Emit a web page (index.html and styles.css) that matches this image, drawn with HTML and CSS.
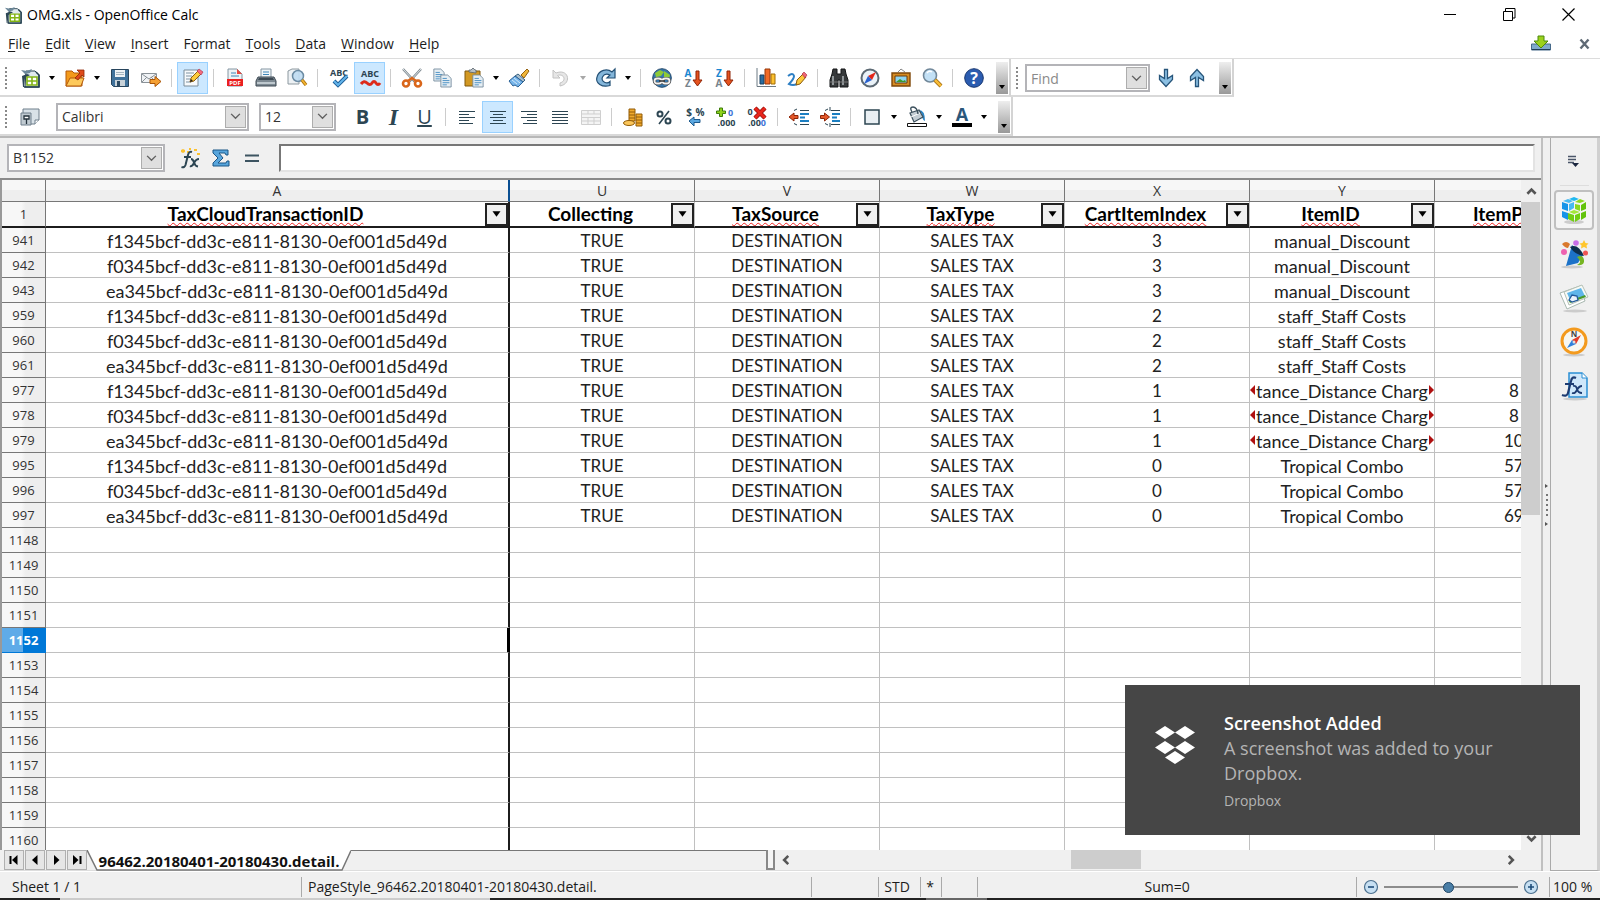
FILE: index.html
```html
<!DOCTYPE html>
<html lang="en">
<head>
<meta charset="utf-8">
<title>OMG.xls - OpenOffice Calc</title>
<link rel="stylesheet" href="styles.css">
</head>
<body>
<svg class="defs" aria-hidden="true">
  <symbol id="calc" viewBox="0 0 20 20"><path d="M6 3h9l4 4v12H5z" fill="#dfe9ee" stroke="#24404f"/><path d="M16 4l3 3v12H4" fill="none" stroke="#24404f" stroke-width="1.6"/><path d="M1 2l6 1 5-2-2 4-5 1z" fill="#6b8799"/><path d="M2 8l5-2 3 1-5 3-1 9H3z" fill="#2c4656"/><path d="M7 9h10v8H7z" fill="#fff" stroke="#82b414" stroke-width="1.6"/><path d="M7 13h10M12 9v8" stroke="#82b414" stroke-width="1.6"/></symbol>
  <symbol id="caret" viewBox="0 0 8 6"><path d="M1 1h6L4 5z" fill="currentColor"/></symbol>
  <symbol id="chev" viewBox="0 0 12 8"><path d="M1 1l5 5 5-5" fill="none" stroke="currentColor" stroke-width="1.6"/></symbol>
  <symbol id="chevbold" viewBox="0 0 12 8"><path d="M1.500 1l4.500 4.500L10.500 1" fill="none" stroke="currentColor" stroke-width="2.8"/></symbol>
  <symbol id="doc" viewBox="0 0 14 16"><path d="M1 1h8l4 4v10H1z" fill="#e6eef3" stroke="#72889a"/><path d="M3 5h5M3 7.500h8M3 10h8M3 12.500h5" stroke="#3b86c0"/></symbol>
</svg>
<div class="window">
  <header class="titlebar">
    <svg class="ico18"><use href="#calc"/></svg>
    <h1>OMG.xls - OpenOffice Calc</h1>
    <div class="winbtns">
      <button aria-label="Minimize"><svg width="13" height="13"><path d="M0 6.500h12" stroke="#000"/></svg></button>
      <button aria-label="Restore"><svg width="13" height="13" fill="none" stroke="#000"><path d="M.5 3.500h9v9h-9zM2.500 3.500v-3h9.500v9.500h-2.500"/></svg></button>
      <button aria-label="Close"><svg width="13" height="13"><path d="M.5.5l12 12M12.500.5l-12 12" stroke="#000" stroke-width="1.200"/></svg></button>
    </div>
  </header>
  <nav class="menubar">
    <button><u>F</u>ile</button><button><u>E</u>dit</button><button><u>V</u>iew</button><button><u>I</u>nsert</button><button>F<u>o</u>rmat</button><button><u>T</u>ools</button><button><u>D</u>ata</button><button><u>W</u>indow</button><button><u>H</u>elp</button>
    <div class="menu-end">
      <button aria-label="Update"><svg class="ico20" viewBox="0 0 20 20"><path d="M.5 10h19v6H.5z" fill="#7fa9cc" stroke="#476a8a"/><path d="M1 15.500h18" stroke="#1f3d58"/><path d="M7 2h6v5h4l-7 7-7-7h4z" fill="#9bd11c" stroke="#4d8a0c"/></svg></button>
      <button aria-label="Close document"><svg width="12" height="12"><path d="M1.500 1.500l8 9M9.500 1.500l-8 9" stroke="#5f6a75" stroke-width="2.400"/></svg></button>
    </div>
  </nav>

  <div class="toolrow">
    <div class="toolbar" role="toolbar" aria-label="Standard">
      <span class="grip"></span>
      <button class="tb" aria-label="New"><svg class="ico20"><use href="#calc"/></svg></button>
      <button class="dd" aria-label="New options"><svg><use href="#caret"/></svg></button>
      <button class="tb" aria-label="Open"><svg class="ico20" viewBox="0 0 20 20"><path d="M1 18V3h6l2 2h8v13z" fill="#f39a1b" stroke="#b4590b"/><path d="M1 18l4-8h14l-3 8z" fill="#fdc95b" stroke="#b4590b"/><path d="M10 10l5-5-3-3h7v7l-2-2-4 5z" fill="#df4b1b" stroke="#8f2606" stroke-width=".8"/></svg></button>
      <button class="dd" aria-label="Open options"><svg><use href="#caret"/></svg></button>
      <button class="tb" aria-label="Save"><svg class="ico20" viewBox="0 0 20 20"><path d="M1.500 1.500h17v17h-15l-2-2z" fill="#40729b" stroke="#27445c"/><path d="M5 2h10v7H5z" fill="#eef3f6"/><path d="M6 4.500h8M6 6.500h8" stroke="#a5b5c0"/><path d="M5 12h10v6H5z" fill="#c8d2d9"/><path d="M7 13h3v5H7z" fill="#2c4a62"/></svg></button>
      <button class="tb" aria-label="E-mail document"><svg class="ico20" viewBox="0 0 20 20"><path d="M.5 5.500h15v9H.5z" fill="#f0f3f6" stroke="#8a9298"/><path d="M1 6l7 5 7-5M1 14l5-5M15 14l-5-5" fill="none" stroke="#8a9298"/><path d="M9 11.500h5V8.500l6 5-6 5v-3H9z" fill="#f5a033" stroke="#a85408"/></svg></button>
      <span class="sep"></span>
      <button class="tb on" aria-label="Edit file"><svg class="ico20" viewBox="0 0 20 20"><path d="M1 2h14v16H1z" fill="#f7fafc" stroke="#7b8d9a"/><path d="M3 5h8M3 8h6M3 11h4M3 14h5" stroke="#7e93a3"/><path d="M7 14l1-4 7-7 3 3-7 7z" fill="#fccb3b" stroke="#8c5b11"/><path d="M14 3l2-2 4 3-2 3z" fill="#f46b7e" stroke="#a72a3e" stroke-width=".6"/><path d="M7 14l1-3 2 2z" fill="#222"/></svg></button>
      <span class="sep"></span>
      <button class="tb" aria-label="Export as PDF"><svg class="ico20" viewBox="0 0 20 20"><path d="M3 1h9l5 5v12H3z" fill="#edf2f5" stroke="#8496a3"/><path d="M12 1l5 5h-5z" fill="#e8473f"/><path d="M6 5h5M6 8h8" stroke="#3e86b9"/><path d="M2 11h16v7H2z" fill="#ea2020"/><text x="10" y="17" text-anchor="middle" font-size="6" class="glyph" fill="#fff">PDF</text></svg></button>
      <button class="tb" aria-label="Print"><svg class="ico20" viewBox="0 0 20 20"><path d="M5 1h10v9H5z" fill="#f2f6f8" stroke="#8496a3"/><path d="M7 4h6M7 6.500h6" stroke="#3e86b9"/><path d="M2 9h16l2 4v5H0v-5z" fill="#7e8a93" stroke="#3d4953"/><path d="M3 10h14l1 2H2z" fill="#3d4953"/><path d="M1 15h18" stroke="#d5dde2" stroke-width="1.500"/></svg></button>
      <button class="tb" aria-label="Page preview"><svg class="ico20" viewBox="0 0 20 20"><path d="M1 3l4-2h7v15H1z" fill="#edf1f4" stroke="#8c989f"/><circle cx="11" cy="8" r="5.500" fill="#bfdcf2" fill-opacity=".9" stroke="#6b8ba3" stroke-width="1.500"/><path d="M15 12l4 5" stroke="#a36a0b" stroke-width="3.400"/><path d="M15 12l4 5" stroke="#f2b330" stroke-width="2"/></svg></button>
      <span class="sep"></span>
      <button class="tb" aria-label="Spelling"><svg class="ico20" viewBox="0 0 20 20"><text x="10" y="8" text-anchor="middle" font-size="9" class="glyph" fill="#2c4552">ABC</text><path d="M5 13l4 4 9-9" fill="none" stroke="#1a5c96" stroke-width="4"/><path d="M5 13l4 4 9-9" fill="none" stroke="#62b3ea" stroke-width="2.200"/></svg></button>
      <button class="tb on" aria-label="AutoSpellcheck"><svg class="ico20" viewBox="0 0 20 20"><text x="10" y="9" text-anchor="middle" font-size="9" class="glyph" fill="#2c4552">ABC</text><path d="M1 16q3-4 6-1t5 0 4 0 4 0" fill="none" stroke="#dd2a1b" stroke-width="3"/></svg></button>
      <span class="sep"></span>
      <button class="tb" aria-label="Cut"><svg class="ico20" viewBox="0 0 20 20"><path d="M1 1l12 13M19 1L7 14" stroke="#7d888f" stroke-width="2.400"/><path d="M1 1l12 13M19 1L7 14" stroke="#dfe5e9"/><circle cx="4" cy="15.500" r="3" fill="none" stroke="#d9661a" stroke-width="2.600"/><circle cx="16" cy="15.500" r="3" fill="none" stroke="#d9661a" stroke-width="2.600"/><path d="M6 13l4-3 4 3" stroke="#d9661a" stroke-width="2.500" fill="none"/></svg></button>
      <button class="tb" aria-label="Copy"><svg class="ico20" viewBox="0 0 20 20"><use href="#doc" x="0" y="0" width="12" height="14"/><use href="#doc" x="7" y="6" width="12" height="14"/></svg></button>
      <button class="tb" aria-label="Paste"><svg class="ico20" viewBox="0 0 20 20"><path d="M1 3h15v15H1z" fill="#d29822" stroke="#80590c"/><path d="M5 4V2h2l2-2 2 2h1v3z" fill="#b6bec4" stroke="#59646c" stroke-width=".8"/><use href="#doc" x="8" y="6" width="12" height="14"/></svg></button>
      <button class="dd" aria-label="Paste options"><svg><use href="#caret"/></svg></button>
      <button class="tb" aria-label="Format paintbrush"><svg class="ico20" viewBox="0 0 20 20"><path d="M12 7l6-6 2 2-5 7z" fill="#f0b63a" stroke="#946210"/><path d="M9 6l7 6-2 2-8-6z" fill="#a9bfce" stroke="#38617f"/><path d="M6 8l8 6-5 5-3-2-2 1-4-5z" fill="#77b5ea" stroke="#2a6297"/><path d="M3 12l5 4M5 10l6 5" stroke="#d0e8fa"/></svg></button>
      <span class="sep"></span>
      <button class="tb" aria-label="Undo" disabled><svg class="ico20" viewBox="0 0 20 20"><path d="M2 2v8h7L6.500 7.500C13 5 16 13 9 15v3c12-2 9-18-4-13z" fill="#e6e6e6" stroke="#c2c2c2"/></svg></button>
      <button class="dd off" aria-label="Undo options" disabled><svg><use href="#caret"/></svg></button>
      <button class="tb" aria-label="Redo"><svg class="ico20" viewBox="0 0 20 20"><path d="M19 1v9h-8l3-3C7 4 3 12 9 14.500c2 .8 4 0 5-1v4C6 20-1 15 1 9 3 2 11 0 16 4z" fill="#84b6da" stroke="#235075" stroke-width="1.200"/></svg></button>
      <button class="dd" aria-label="Redo options"><svg><use href="#caret"/></svg></button>
      <span class="sep"></span>
      <button class="tb" aria-label="Hyperlink"><svg class="ico20" viewBox="0 0 20 20"><circle cx="10" cy="10" r="9.300" fill="#3677ae" stroke="#24496b"/><path d="M3 5l5-3 4 2-3 4-5 1zM12 3l6 4-1 4-5-2z" fill="#8fca36"/><rect x="2.500" y="10.500" width="7" height="5" rx="2.500" fill="none" stroke="#444" stroke-width="3"/><rect x="10.500" y="10.500" width="7" height="5" rx="2.500" fill="none" stroke="#444" stroke-width="3"/><rect x="2.500" y="10.500" width="7" height="5" rx="2.500" fill="none" stroke="#f1f1f1" stroke-width="1.800"/><rect x="10.500" y="10.500" width="7" height="5" rx="2.500" fill="none" stroke="#f1f1f1" stroke-width="1.800"/><path d="M7 13h6" stroke="#333" stroke-width="1.500"/></svg></button>
      <button class="tb" aria-label="Sort ascending"><svg class="ico20" viewBox="0 0 20 20"><text x="5" y="9" text-anchor="middle" font-size="10" class="glyph" fill="#1a86d0">A</text><text x="5" y="19" text-anchor="middle" font-size="10" class="glyph" fill="#77838c">Z</text><path d="M13 3h3v9h3l-4.500 6L10 12h3z" fill="#e5531f" stroke="#8f2506"/></svg></button>
      <button class="tb" aria-label="Sort descending"><svg class="ico20" viewBox="0 0 20 20"><text x="5" y="9" text-anchor="middle" font-size="10" class="glyph" fill="#1a86d0">Z</text><text x="5" y="19" text-anchor="middle" font-size="10" class="glyph" fill="#77838c">A</text><path d="M13 3h3v9h3l-4.500 6L10 12h3z" fill="#e5531f" stroke="#8f2506"/></svg></button>
      <span class="sep"></span>
      <button class="tb" aria-label="Chart"><svg class="ico20" viewBox="0 0 20 20"><path d="M1 0v18.500h19" fill="none" stroke="#6d7a84"/><path d="M4 7h4v9H4z" fill="#2b6c9e" stroke="#193f5e"/><path d="M9 1h5v15H9z" fill="#f06a26" stroke="#943407"/><path d="M15 6h4v10h-4z" fill="#fcc02f" stroke="#a16d06"/></svg></button>
      <button class="tb" aria-label="Show draw functions"><svg class="ico20" viewBox="0 0 20 20"><path d="M1 8q5-4 6 0 0 3-5 8 4 2 8 0" fill="none" stroke="#2d7fc4" stroke-width="2"/><path d="M9 17l1-5 6-6 3 3-6 7z" fill="#fcc93c" stroke="#8b5a0d"/><path d="M15 6l2-2 3 3-2 3z" fill="#ee6577" stroke="#a52a3a" stroke-width=".6"/></svg></button>
      <span class="sep"></span>
      <button class="tb" aria-label="Find and replace"><svg class="ico20" viewBox="0 0 20 20"><path d="M4 1h4v5h4V1h4l1 5 2 6v7h-8v-7H9v7H1v-7l2-6z" fill="#36393b" stroke="#131516"/><path d="M4 8v9M14 8v9" stroke="#9aa0a4" stroke-width="1.800"/><path d="M1 14h8M11 14h8" stroke="#777"/></svg></button>
      <button class="tb" aria-label="Navigator"><svg class="ico20" viewBox="0 0 20 20"><circle cx="10" cy="10" r="8.500" fill="#eaf2f8" stroke="#5d6a74" stroke-width="2"/><path d="M16 4l-4 8-4-4z" fill="#e3261a"/><path d="M4 16l4-8 4 4z" fill="#2a62cf"/></svg></button>
      <button class="tb" aria-label="Gallery"><svg class="ico20" viewBox="0 0 20 20"><path d="M7 4l3-3 4 3" fill="none" stroke="#888"/><path d="M1 5h18v13H1z" fill="#d58b22" stroke="#7e4708" stroke-width="1.400"/><path d="M4 8h12v7H4z" fill="#8ed5f2" stroke="#6e3c08"/><path d="M5 14l4-3 3 2 2-1 1 2z" fill="#3c9a2c"/></svg></button>
      <button class="tb" aria-label="Zoom"><svg class="ico20" viewBox="0 0 20 20"><circle cx="8" cy="7.500" r="6.500" fill="#c2e0f5" stroke="#71889a" stroke-width="1.600"/><path d="M5 5q2-3 5-1" stroke="#fff" fill="none" stroke-width="1.500"/><path d="M13 12l6 6" stroke="#9a650b" stroke-width="4"/><path d="M13 12l6 6" stroke="#f7bb36" stroke-width="2.500"/></svg></button>
      <span class="sep"></span>
      <button class="tb" aria-label="Help"><svg class="ico20" viewBox="0 0 20 20"><circle cx="10" cy="10" r="9.300" fill="#2b5cb0" stroke="#173670"/><text x="10" y="16" text-anchor="middle" font-size="16" class="glyph" fill="#fff">?</text></svg></button>
      <button class="more" aria-label="More standard tools"><svg><use href="#caret"/></svg></button>
    </div>
    <div class="toolbar" role="toolbar" aria-label="Find">
      <span class="grip"></span>
      <div class="combo find"><input type="text" placeholder="Find" aria-label="Find"><span class="combo-arrow"><svg><use href="#chev"/></svg></span></div>
      <button class="tb" aria-label="Find next"><svg class="ico20" viewBox="0 0 20 20"><path d="M8.500 1.500h3v9l5-3v4l-6.500 7-6.500-7v-4l5 3z" fill="#8cc0e3" stroke="#27557a" stroke-width="1.300"/></svg></button>
      <button class="tb" aria-label="Find previous"><svg class="ico20" viewBox="0 0 20 20"><path d="M8.500 18.500h3v-9l5 3v-4l-6.500-7-6.500 7v4l5-3z" fill="#8cc0e3" stroke="#27557a" stroke-width="1.300"/></svg></button>
      <button class="more" aria-label="More find tools"><svg><use href="#caret"/></svg></button>
    </div>
  </div>

  <div class="toolrow">
    <div class="toolbar" role="toolbar" aria-label="Formatting">
      <span class="grip"></span>
      <button class="tb" aria-label="Styles and formatting"><svg class="ico20" viewBox="0 0 20 20"><path d="M3 2h16v11l-4 4H3z" fill="#d9e2e8" stroke="#6e7f8b"/><path d="M15 17v-4h4" fill="#fff" stroke="#6e7f8b"/><path d="M1 6h10v12H1z" fill="#c0cad1" stroke="#6e7f8b"/><path d="M4 9h5v3H4zM6.500 12v5" fill="#fff" stroke="#25333d" stroke-width="1.300"/></svg></button>
      <div class="combo fontname"><select aria-label="Font name"><option>Calibri</option></select><span class="combo-arrow"><svg><use href="#chev"/></svg></span></div>
      <div class="combo fontsize"><select aria-label="Font size"><option>12</option></select><span class="combo-arrow"><svg><use href="#chev"/></svg></span></div>
      <button class="tb letter b" aria-label="Bold">B</button>
      <button class="tb letter i" aria-label="Italic">I</button>
      <button class="tb letter und" aria-label="Underline">U</button>
      <span class="sep"></span>
      <button class="tb" aria-label="Align left"><svg class="ico20 lines" viewBox="0 0 20 20"><path d="M2 4.500h16M2 7.500h10M2 10.500h16M2 13.500h10M2 16.500h14"/></svg></button>
      <button class="tb on" aria-label="Align center"><svg class="ico20 lines" viewBox="0 0 20 20"><path d="M2 4.500h16M5 7.500h10M2 10.500h16M5 13.500h10M2 16.500h16"/></svg></button>
      <button class="tb" aria-label="Align right"><svg class="ico20 lines" viewBox="0 0 20 20"><path d="M2 4.500h16M8 7.500h10M2 10.500h16M8 13.500h10M4 16.500h14"/></svg></button>
      <button class="tb" aria-label="Justify"><svg class="ico20 lines" viewBox="0 0 20 20"><path d="M2 4.500h16M2 7.500h16M2 10.500h16M2 13.500h16M2 16.500h16"/></svg></button>
      <button class="tb" aria-label="Merge cells" disabled><svg class="ico20" viewBox="0 0 20 20"><path d="M.5 3.500h19v14H.5zM.5 7h19M.5 10.500h19M.5 14h19M7 3.500V7M13 3.500V7M7 10.500v7M13 10.500v7" fill="#f4f4f4" stroke="#cfcfcf"/></svg></button>
      <span class="sep"></span>
      <button class="tb" aria-label="Currency"><svg class="ico20" viewBox="0 0 20 20"><path d="M6 2h6v12H6z" fill="#f0a92c" stroke="#925d08"/><path d="M6 5h6M6 8h6M6 11h6" stroke="#925d08"/><path d="M13 7h6v12h-6z" fill="#f0a92c" stroke="#925d08"/><path d="M13 10h6M13 13h6M13 16h6" stroke="#925d08"/><ellipse cx="6" cy="16" rx="5.500" ry="2.500" fill="#fbc65a" stroke="#925d08"/></svg></button>
      <button class="tb" aria-label="Percent"><svg class="ico20" viewBox="0 0 20 20"><circle cx="6" cy="7" r="2.500" fill="none" stroke="#2c4552" stroke-width="2"/><circle cx="14" cy="14" r="2.500" fill="none" stroke="#2c4552" stroke-width="2"/><path d="M15 4L5 17" stroke="#2c4552" stroke-width="1.600"/></svg></button>
      <button class="tb" aria-label="Standard format"><svg class="ico20" viewBox="0 0 20 20"><text x="4" y="9" text-anchor="middle" font-size="10" class="glyph" fill="#2c4552">$</text><text x="15" y="9" text-anchor="middle" font-size="10" class="glyph" fill="#2c4552">%</text><path d="M4 14l5-4v2.500h6v3H9V19z" fill="#5aa7e0" stroke="#1e5a8d"/></svg></button>
      <button class="tb" aria-label="Add decimal place"><svg class="ico20" viewBox="0 0 20 20"><path d="M3.500 1h3v3h3v2.500h-3v3h-3v-3h-3V4h3z" fill="#8ed11c" stroke="#3d7d0b"/><text x="14.500" y="9" text-anchor="middle" font-size="9" class="glyph" fill="#3f74d8">0</text><text x="10.500" y="19" text-anchor="middle" font-size="9" class="glyph" fill="#2c4552">.000</text></svg></button>
      <button class="tb" aria-label="Delete decimal place"><svg class="ico20" viewBox="0 0 20 20"><text x="3" y="8" text-anchor="middle" font-size="9" class="glyph" fill="#2c4552">0</text><text x="10" y="19" text-anchor="middle" font-size="9" class="glyph" fill="#2c4552">.00<tspan fill="#3f74d8">0</tspan></text><path d="M8 1l10 10M18 1L8 11" stroke="#8e0c08" stroke-width="4.400"/><path d="M8 1l10 10M18 1L8 11" stroke="#e8261c" stroke-width="3"/></svg></button>
      <span class="sep"></span>
      <button class="tb" aria-label="Decrease indent"><svg class="ico20" viewBox="0 0 20 20"><path d="M5 3.500l3-1.500M11 3.500h9M5 16.500l3 1.500M11 17.500h9" stroke="#2c4552"/><path d="M11 7h9M11 10.500h5M11 14h9" stroke="#1b7fc2" stroke-width="2"/><path d="M0 10l5-4v2.500h4v3H5V14z" fill="#e5582a" stroke="#8f2506"/></svg></button>
      <button class="tb" aria-label="Increase indent"><svg class="ico20" viewBox="0 0 20 20"><path d="M5 3.500l3-1.500M11 3.500h9M5 16.500l3 1.500M11 17.500h9M10 0v4M10 16v4" stroke="#2c4552"/><path d="M12 7h8M12 10.500h5M12 14h8" stroke="#1b7fc2" stroke-width="2"/><path d="M9.500 10l-5-4v2.500H.5v3h4V14z" fill="#e5582a" stroke="#8f2506"/></svg></button>
      <span class="sep"></span>
      <button class="tb" aria-label="Borders"><svg class="ico20" viewBox="0 0 20 20"><path d="M3 3h14v14H3z" fill="#e9eff3" stroke="#2c4552" stroke-width="1.500"/></svg></button>
      <button class="dd" aria-label="Border options"><svg><use href="#caret"/></svg></button>
      <button class="tb" aria-label="Background color"><svg class="ico20" viewBox="0 0 20 20"><path d="M11 3q7-1 7 11-3-1-3-7z" fill="#2d86c6"/><path d="M3 6l9-3 4 7-9 5z" fill="#c3cdd4" stroke="#3b4f5c" stroke-width="1.200"/><path d="M4 10l9-4" stroke="#fff"/><path d="M5 5q-3-5 1-5t5 7" fill="none" stroke="#3b4f5c" stroke-width="1.400"/><path d="M.5 16.500h19v3H.5z" fill="#fff" stroke="#111"/></svg></button>
      <button class="dd" aria-label="Background color options"><svg><use href="#caret"/></svg></button>
      <button class="tb" aria-label="Font color"><svg class="ico20" viewBox="0 0 20 20"><text x="10" y="14" text-anchor="middle" font-size="18" class="glyph" fill="#2b577b">A</text><path d="M0 16h20v4H0z" fill="#000"/></svg></button>
      <button class="dd" aria-label="Font color options"><svg><use href="#caret"/></svg></button>
      <button class="more" aria-label="More formatting tools"><svg><use href="#caret"/></svg></button>
    </div>
  </div>

  <div class="work">
    <main class="main">
      <div class="formula">
        <div class="combo namebox"><select aria-label="Name box"><option>B1152</option></select><span class="combo-arrow"><svg><use href="#chev"/></svg></span></div>
        <button class="tb" aria-label="Function wizard"><svg class="ico20" viewBox="0 0 20 20"><path d="M1 2l2-1 2 1v2L3 5 1 4zM9 0h2v2H9zM14 1h3v2h-3zM17 5h3v2h-3zM7 3h2v2H7z" fill="#fcc230"/><path d="M12 4q-3-1-4 3L5.500 17q-1 3-4 2M4 9h7" fill="none" stroke="#2c4552" stroke-width="2"/><path d="M11 11q2 0 3 3.500t4 4M19 11q-3 0-5 4t-4 3" fill="none" stroke="#2c4552" stroke-width="2"/></svg></button>
        <button class="tb" aria-label="Sum"><svg class="ico20" viewBox="0 0 20 20"><path d="M2 2h15v5h-2l-1-2H8l4 5-5 5h8l1-2h2v5H2v-3l5-5-5-5z" fill="#57a5dc" stroke="#1b5687"/></svg></button>
        <button class="tb" aria-label="Function"><svg class="ico20" viewBox="0 0 20 20"><path d="M3 7.500h14M3 13h14" stroke="#3d5461" stroke-width="2"/></svg></button>
        <input class="formula-input" type="text" aria-label="Input line">
      </div>
      <div class="sheet">
        <div class="tablewrap">
        <table>
          <colgroup><col class="c-row"><col class="c-a"><col class="c-n"><col class="c-n"><col class="c-n"><col class="c-n"><col class="c-n"><col></colgroup>
          <thead>
            <tr class="cols"><th></th><th>A</th><th>U</th><th>V</th><th>W</th><th>X</th><th>Y</th><th></th></tr>
            <tr class="fields"><th>1</th>
              <td><div><b class="sp">TaxCloudTransactionID</b><button aria-label="Filter TaxCloudTransactionID"><svg><use href="#caret"/></svg></button></div></td>
              <td><div><b>Collecting</b><button aria-label="Filter Collecting"><svg><use href="#caret"/></svg></button></div></td>
              <td><div><b class="sp">TaxSource</b><button aria-label="Filter TaxSource"><svg><use href="#caret"/></svg></button></div></td>
              <td><div><b class="sp">TaxType</b><button aria-label="Filter TaxType"><svg><use href="#caret"/></svg></button></div></td>
              <td><div><b class="sp">CartItemIndex</b><button aria-label="Filter CartItemIndex"><svg><use href="#caret"/></svg></button></div></td>
              <td><div><b class="sp">ItemID</b><button aria-label="Filter ItemID"><svg><use href="#caret"/></svg></button></div></td>
              <td class="cut"><b class="sp">ItemPrice</b></td></tr>
          </thead>
          <tbody>
            <tr><th>941</th><td>f1345bcf-dd3c-e811-8130-0ef001d5d49d</td><td>TRUE</td><td>DESTINATION</td><td>SALES TAX</td><td>3</td><td>manual_Discount</td><td></td></tr>
            <tr><th>942</th><td>f0345bcf-dd3c-e811-8130-0ef001d5d49d</td><td>TRUE</td><td>DESTINATION</td><td>SALES TAX</td><td>3</td><td>manual_Discount</td><td></td></tr>
            <tr><th>943</th><td>ea345bcf-dd3c-e811-8130-0ef001d5d49d</td><td>TRUE</td><td>DESTINATION</td><td>SALES TAX</td><td>3</td><td>manual_Discount</td><td></td></tr>
            <tr><th>959</th><td>f1345bcf-dd3c-e811-8130-0ef001d5d49d</td><td>TRUE</td><td>DESTINATION</td><td>SALES TAX</td><td>2</td><td>staff_Staff Costs</td><td></td></tr>
            <tr><th>960</th><td>f0345bcf-dd3c-e811-8130-0ef001d5d49d</td><td>TRUE</td><td>DESTINATION</td><td>SALES TAX</td><td>2</td><td>staff_Staff Costs</td><td></td></tr>
            <tr><th>961</th><td>ea345bcf-dd3c-e811-8130-0ef001d5d49d</td><td>TRUE</td><td>DESTINATION</td><td>SALES TAX</td><td>2</td><td>staff_Staff Costs</td><td></td></tr>
            <tr><th>977</th><td>f1345bcf-dd3c-e811-8130-0ef001d5d49d</td><td>TRUE</td><td>DESTINATION</td><td>SALES TAX</td><td>1</td><td class="over">tance_Distance Charg</td><td class="num one">8</td></tr>
            <tr><th>978</th><td>f0345bcf-dd3c-e811-8130-0ef001d5d49d</td><td>TRUE</td><td>DESTINATION</td><td>SALES TAX</td><td>1</td><td class="over">tance_Distance Charg</td><td class="num one">8</td></tr>
            <tr><th>979</th><td>ea345bcf-dd3c-e811-8130-0ef001d5d49d</td><td>TRUE</td><td>DESTINATION</td><td>SALES TAX</td><td>1</td><td class="over">tance_Distance Charg</td><td class="num">10</td></tr>
            <tr><th>995</th><td>f1345bcf-dd3c-e811-8130-0ef001d5d49d</td><td>TRUE</td><td>DESTINATION</td><td>SALES TAX</td><td>0</td><td>Tropical Combo</td><td class="num">57</td></tr>
            <tr><th>996</th><td>f0345bcf-dd3c-e811-8130-0ef001d5d49d</td><td>TRUE</td><td>DESTINATION</td><td>SALES TAX</td><td>0</td><td>Tropical Combo</td><td class="num">57</td></tr>
            <tr><th>997</th><td>ea345bcf-dd3c-e811-8130-0ef001d5d49d</td><td>TRUE</td><td>DESTINATION</td><td>SALES TAX</td><td>0</td><td>Tropical Combo</td><td class="num">69</td></tr>
            <tr><th>1148</th><td></td><td></td><td></td><td></td><td></td><td></td><td></td></tr>
            <tr><th>1149</th><td></td><td></td><td></td><td></td><td></td><td></td><td></td></tr>
            <tr><th>1150</th><td></td><td></td><td></td><td></td><td></td><td></td><td></td></tr>
            <tr><th>1151</th><td></td><td></td><td></td><td></td><td></td><td></td><td></td></tr>
            <tr class="current"><th>1152</th><td></td><td></td><td></td><td></td><td></td><td></td><td></td></tr>
            <tr><th>1153</th><td></td><td></td><td></td><td></td><td></td><td></td><td></td></tr>
            <tr><th>1154</th><td></td><td></td><td></td><td></td><td></td><td></td><td></td></tr>
            <tr><th>1155</th><td></td><td></td><td></td><td></td><td></td><td></td><td></td></tr>
            <tr><th>1156</th><td></td><td></td><td></td><td></td><td></td><td></td><td></td></tr>
            <tr><th>1157</th><td></td><td></td><td></td><td></td><td></td><td></td><td></td></tr>
            <tr><th>1158</th><td></td><td></td><td></td><td></td><td></td><td></td><td></td></tr>
            <tr><th>1159</th><td></td><td></td><td></td><td></td><td></td><td></td><td></td></tr>
            <tr><th>1160</th><td></td><td></td><td></td><td></td><td></td><td></td><td></td></tr>
          </tbody>
        </table>
        </div>
        <div class="vscroll">
          <button aria-label="Scroll up"><svg class="up"><use href="#chevbold"/></svg></button>
          <div class="vtrack"><div class="vthumb"></div></div>
          <button aria-label="Scroll down"><svg><use href="#chevbold"/></svg></button>
        </div>
      </div>
      <div class="tabs">
        <div class="tabnav">
          <button aria-label="First sheet"><svg width="12" height="12"><path d="M2.500 2v8" stroke="#000" stroke-width="2"/><path d="M9.500 1v10L4 6z"/></svg></button>
          <button aria-label="Previous sheet"><svg width="12" height="12"><path d="M8.500 1v10L3 6z"/></svg></button>
          <button aria-label="Next sheet"><svg width="12" height="12"><path d="M4 1v10l5.500-5z"/></svg></button>
          <button aria-label="Last sheet"><svg width="12" height="12"><path d="M2 1v10l5.500-5z"/><path d="M9.500 2v8" stroke="#000" stroke-width="2"/></svg></button>
        </div>
        <button class="tab"><svg viewBox="0 0 264 21" preserveAspectRatio="none" aria-hidden="true"><path d="M0 0l10 20h245l9-20z" fill="#fff"/><path d="M0 0l10 20h245l9-19.500" fill="none" stroke="#777" stroke-width="1.500"/></svg><span>96462.20180401-20180430.detail.</span></button>
        <div class="tabfill"></div>
        <div class="hsplit"></div>
        <div class="hscroll">
          <button aria-label="Scroll left"><svg class="left"><use href="#chevbold"/></svg></button>
          <div class="htrack"><div class="hthumb"></div></div>
          <button aria-label="Scroll right"><svg class="right"><use href="#chevbold"/></svg></button>
        </div>
      </div>
    </main>
    <div class="splitter"><i></i><span></span><i></i></div>
    <aside class="sidebar">
      <button class="sb-menu" aria-label="Sidebar settings"><svg width="14" height="14"><path d="M1 2.500h8M1 5.500h8M1 8.500h6" stroke="#4a5568" stroke-width="1.500"/><path d="M5 9h7l-3.500 4z" fill="#1c2740"/></svg></button>
      <hr>
      <button class="sb on" aria-label="Properties"><svg viewBox="0 0 28 28"><ellipse cx="14" cy="26" rx="10" ry="2" fill="#ccc"/><path d="M2 6l6 2v7l-6-2zM2 15l6 2v7l-6-3z" fill="#1694e8"/><path d="M9 3l5-2 5 2-5 2z" fill="#20b8f0"/><path d="M3 5l5-2 5 2-4 2zM9 8l5-2v6l-5 3z" fill="#48baf2"/><path d="M15 6l5-3 5 2-5 2zM15 8l5 1v6l-5-2z" fill="#8cd820"/><path d="M21 9l5-3v7l-5 2zM21 17l5-2v6l-5 3z" fill="#63c30c"/><path d="M9 16l5-2 6 2-6 2z" fill="#a4e83a"/><path d="M8 17l6 2v7l-6-3zM15 19l5-2v6l-5 3z" fill="#73cf12"/></svg></button>
      <button class="sb" aria-label="Styles"><svg viewBox="0 0 28 28"><ellipse cx="12" cy="27" rx="11" ry="1.500" fill="#ccc"/><path d="M2 4q4-4 8 0l-2 4q-3 0-6-4z" fill="#d9782c"/><path d="M12 5L6 26l12-3 5-8z" fill="#1c72c8"/><path d="M10 7q8-4 14 9-9-1-14-9z" fill="#0d2f4e"/><path d="M17 17q6-3 7 3t-7 5q6-3 0-8z" fill="#76b522"/><circle cx="16" cy="3" r="2.800" fill="#c86ee8"/><path d="M24 0l1.500 3 3 .5-2 2 .5 3-3-1.500-3 1.500.5-3-2-2 3-.5z" fill="#ffc62c"/><circle cx="4" cy="12" r="3" fill="#ee62b0"/><circle cx="25.500" cy="13" r="2.500" fill="#f05454"/></svg></button>
      <button class="sb" aria-label="Gallery"><svg viewBox="0 0 28 28"><ellipse cx="15" cy="27" rx="12" ry="1.500" fill="#ccc"/><path d="M0 9l20-7 5 15-18 8z" fill="#fff" stroke="#a8b8b0"/><path d="M4 8l18-7 6 12-19 8z" fill="#f6faf6" stroke="#b5c0b5"/><path d="M7 9l14-5 4 8-14 6z" fill="#5fb6ea"/><path d="M9 17l16-6 1 2-16 6z" fill="#4b9a2e"/><path d="M9 16l3-5 5 1 1 4-6 2z" fill="#e9f2fb" stroke="#225a9c" stroke-width="1.300"/></svg></button>
      <button class="sb" aria-label="Navigator"><svg viewBox="0 0 28 28"><ellipse cx="14" cy="27" rx="11" ry="1.500" fill="#ccc"/><circle cx="14" cy="13" r="12" fill="#f7f7f2" stroke="#f39a1e" stroke-width="3"/><text x="14" y="9" text-anchor="middle" font-size="8" class="glyph" fill="#444">N</text><path d="M21 7l-5 9-4-4z" fill="#e23c2a"/><path d="M7 20l5-8 4 4z" fill="#2f80dc"/><circle cx="14" cy="14" r="1.500" fill="#ddd"/></svg></button>
      <button class="sb" aria-label="Functions"><svg viewBox="0 0 28 28"><ellipse cx="15" cy="27" rx="12" ry="1.500" fill="#ccc"/><path d="M9 1h13l5 5v19H9z" fill="#cfe7fa" stroke="#2a8fd4" stroke-width="1.500"/><path d="M22 1v5h5" fill="#fff" stroke="#2a8fd4"/><path d="M16 6q-4-2-5 3L8 21q-1 4-6 2M5 12h9" fill="none" stroke="#1e3c72" stroke-width="2.200"/><path d="M13 14q3-1 4 3t5 4M22 14q-3 0-5 4t-5 3" fill="none" stroke="#1e3c72" stroke-width="1.800"/></svg></button>
    </aside>
  </div>

  <footer class="status">
    <span class="s-sheet">Sheet 1 / 1</span>
    <span class="s-style">PageStyle_96462.20180401-20180430.detail.</span>
    <span class="s-ins"></span>
    <span class="s-std">STD</span>
    <span class="s-mod">*</span>
    <span class="s-sig"></span>
    <span class="s-sum">Sum=0</span>
    <div class="s-zoom">
      <button aria-label="Zoom out"><svg width="16" height="16"><circle cx="8" cy="8" r="6.500" fill="#c6dff2" stroke="#4a6f8e" stroke-width="1.200"/><path d="M5 8h6" stroke="#1d4c78" stroke-width="1.600"/></svg></button>
      <input type="range" min="0" max="100" value="48" aria-label="Zoom">
      <button aria-label="Zoom in"><svg width="16" height="16"><circle cx="8" cy="8" r="6.500" fill="#c6dff2" stroke="#4a6f8e" stroke-width="1.200"/><path d="M5 8h6M8 5v6" stroke="#1d4c78" stroke-width="1.600"/></svg></button>
    </div>
    <span class="s-pct">100 %</span>
  </footer>
  <div class="taskedge"></div>
</div>
<section class="toast" role="alert">
  <svg viewBox="0 0 42 40" aria-hidden="true"><path d="M11 1l10 6.500L11 14 1 7.500zM31 1l10 6.500L31 14l-10-6.500zM11 16l10 6.500L11 29 1 22.500zM31 16l10 6.500L31 29l-10-6.500zM21 26l10 6.500L21 39l-10-6.500z" fill="#fff"/></svg>
  <div><h2>Screenshot Added</h2><p>A screenshot was added to your Dropbox.</p><small>Dropbox</small></div>
</section>
</body>
</html>
```
FILE: styles.css
```css
* { box-sizing: border-box; }
body { margin: 0; height: 100vh; overflow: hidden; background: #fff; color: #1c1c1c; font: 14px/20px "Open Sans", "Noto Sans", sans-serif; }
button, input, select { font: inherit; color: inherit; margin: 0; padding: 0; border: 0; background: none; border-radius: 0; }
button { display: flex; align-items: center; justify-content: center; flex: none; }
svg { display: block; flex: none; }
.defs { position: absolute; width: 0; height: 0; }
.window { display: flex; flex-direction: column; height: 100vh; }
.ico18 { width: 18px; height: 18px; }
.ico20 { width: 20px; height: 20px; overflow: visible; }
.glyph { font-family: "Open Sans", sans-serif; font-weight: 700; }

.titlebar { display: flex; align-items: center; gap: 5px; height: 29px; padding-left: 4px; }
.titlebar h1 { margin: 0; font-size: 14px; font-weight: 400; color: #000; }
.winbtns { display: flex; margin-left: auto; padding-right: 2px; }
.winbtns button { width: 59px; height: 28px; }

.menubar { display: flex; align-items: center; gap: 15px; height: 30px; padding: 0 9px 0 8px; border-bottom: 1px solid #dcdcdc; }
.menubar u { text-underline-offset: 2px; }
.menu-end { display: flex; align-items: center; gap: 28px; margin-left: auto; }

.toolrow { display: flex; height: 39px; }
.toolrow:nth-of-type(1) { height: 38px; }
.toolbar { display: flex; align-items: center; border-right: 2px solid #d4d4d4; border-bottom: 2px solid #d9d9d9; padding: 2px 1px 0 5px; }
.grip { width: 2px; height: 22px; margin-right: 7px; background: repeating-linear-gradient(#8a8a8a 0 2px, #fff 2px 4px); }
.tb { width: 31px; height: 32px; border: 1px solid transparent; }
.tb.on { background: #cce8ff; border-color: #99d1ff; }
.dd { width: 14px; height: 32px; color: #000; }
.dd svg, .more svg { width: 8px; height: 6px; }
.dd.off { color: #a8a8a8; }
.sep { width: 1px; height: 18px; margin: 0 5px; background: #ccc; }
.more { width: 12px; height: 32px; margin-left: 7px; padding-bottom: 4px; align-items: flex-end; background: linear-gradient(#eee, #999); color: #000; }
.combo { position: relative; height: 28px; border: 2px solid #b4b4b8; background: #fff; }
.combo select, .combo input { width: 100%; height: 24px; padding: 0 30px 0 4px; appearance: none; outline: 0; display: block; color: #333; }
.combo input::placeholder { color: #8a8a8a; opacity: 1; }
.combo-arrow { position: absolute; right: 1px; top: 1px; bottom: 1px; width: 21px; display: flex; align-items: center; justify-content: center; background: #dfdfdf; border: 1px solid #adadad; color: #606060; pointer-events: none; }
.combo-arrow svg { width: 11px; height: 7px; }
.find { width: 125px; }
.fontname { width: 193px; margin: 0 10px 0 11px; }
.fontsize { width: 77px; margin-right: 11px; }
.letter { font-size: 20px; font-weight: 700; color: #2c4552; }
.letter.i { font-family: "Liberation Serif", serif; font-style: italic; font-size: 24px; }
.letter.und { font-weight: 400; text-decoration: underline; text-decoration-thickness: 2px; }
.lines { stroke: #2c4552; stroke-width: 1; }

.work { display: flex; flex: 1; min-height: 0; border-top: 2px solid #b8b8b8; background: #f0f0f0; }
.main { display: flex; flex-direction: column; flex: 1; min-width: 0; border-right: 2px solid #c0c0c0; }
.formula { display: flex; align-items: center; height: 42px; padding: 0 6px 0 7px; border-bottom: 2px solid #8a8a8a; }
.namebox { width: 158px; margin-right: 9px; }
.formula-input { flex: 1; height: 28px; margin-left: 12px; padding: 0 4px; background: #fff; border: 2px solid; border-color: #777 #e3e3e3 #e3e3e3 #777; }
.sheet { display: flex; flex: 1; min-height: 0; }
.tablewrap { flex: 1; min-width: 0; overflow: hidden; background: #fff; border-left: 2px solid #999; }
table { width: 100%; table-layout: fixed; border-collapse: separate; border-spacing: 0; }
.c-row { width: 44px; }
.c-a { width: 464px; }
.c-n { width: 185px; }
th { font-weight: 400; color: #333; padding: 0; }
td { height: 25px; padding: 2px 0 0; text-align: center; overflow: hidden; white-space: nowrap; border-right: 1px solid #c0c0c0; border-bottom: 1px solid #c0c0c0; font: 17px/22px Lato, sans-serif; color: #222; }
tbody td:nth-child(2), tbody td:nth-child(7) { font-size: 18px; }
tr > :last-child { border-right: 0; }
tr > td:nth-child(2) { border-right: 2px solid #1c1c1c; }
tbody th, .fields th { border-right: 1px solid #777; border-bottom: 1px solid #777; background: linear-gradient(90deg, #f7f7f7 45%, #eee 55%); font-size: 13px; }
.cols th { height: 22px; font-size: 14px; line-height: 20px; background: linear-gradient(#f7f7f7 50%, #eee 50%); border-right: 1px solid #777; border-bottom: 1px solid #777; }
.cols th:nth-child(2) { border-right: 2px solid #0a4f92; }
.cols th:last-child { border-right: 0; }
.fields th, .fields td { height: 26px; border-bottom: 2px solid #1c1c1c; }
.fields td { color: #000; font-size: 19px; padding: 0; }
.fields td > div { display: flex; align-items: center; }
.fields b { flex: 1; }
.fields button { width: 23px; height: 23px; background: #f0f0f0; border: 2px solid #222; color: #000; }
.fields button svg { width: 11px; height: 8px; }
.sp { text-decoration: underline wavy #e22 1px; text-underline-offset: 1px; text-decoration-skip-ink: none; }
.fields .cut { text-align: left; padding-left: 38px; }
.over { position: relative; }
.over::before, .over::after { content: ""; position: absolute; top: 7px; border: 5px solid transparent; }
.over::before { left: 0; border-left: 0; border-right-color: #b01010; }
.over::after { right: 0; border-right: 0; border-left-color: #b01010; }
td.num { text-align: left; padding-left: 69px; }
td.num.one { padding-left: 74px; }
.current th { background: linear-gradient(90deg, #5fabe8 48%, #0078d7 48%); color: #fff; font-weight: 700; border-color: #0078d7; }
.current td:nth-child(2) { border-right: 3px solid #000; }

.vscroll { display: flex; flex-direction: column; width: 20px; background: #f0f0f0; }
.vscroll button { height: 22px; width: 20px; color: #555; }
.vscroll svg, .hscroll svg { width: 11px; height: 8px; }
.up { transform: rotate(180deg); }
.left { transform: rotate(90deg); }
.right { transform: rotate(270deg); }
.vtrack { flex: 1; }
.vthumb { height: 50%; width: 19px; background: #cdcdcd; }

.tabs { display: flex; height: 21px; border-bottom: 1px solid #ddd; }
.tabnav { display: flex; gap: 1px; padding-left: 4px; }
.tabnav button { width: 20px; height: 20px; background: #e6e6e6; border: 1px solid #b0b0b0; }
.tab { position: relative; width: 264px; height: 21px; font-size: 15px; font-weight: 700; color: #111; }
.tab svg { position: absolute; inset: 0; width: 100%; height: 100%; }
.tab span { position: relative; }
.tabfill { flex: 415; border-top: 1px solid #777; }
.hsplit { width: 9px; border: 2px solid #888; border-top: 0; background: #f4f4f4; }
.hscroll { display: flex; flex: 745; margin-right: 20px; }
.hscroll button { width: 20px; height: 20px; color: #555; }
.htrack { flex: 1; }
.hthumb { width: 10%; height: 19px; margin-left: 39%; background: #cdcdcd; }

.splitter { width: 8px; display: flex; flex-direction: column; align-items: center; justify-content: center; gap: 6px; border-right: 1px solid #aaa; }
.splitter span { width: 2px; height: 22px; background: repeating-linear-gradient(#777 0 2px, transparent 2px 5px); }
.splitter i { border: 2px solid transparent; border-left: 3px solid #555; border-right: 0; }
.sidebar { display: flex; flex-direction: column; align-items: center; gap: 4px; width: 49px; border-right: 3px solid #d0d0d0; border-bottom: 1px solid #aaa; }
.sb-menu { width: 30px; height: 43px; padding-top: 2px; }
.sidebar hr { width: 29px; margin: 0; border: 0; border-top: 1px solid #ddd; }
.sb { width: 40px; height: 40px; border: 1px solid transparent; border-radius: 4px; }
.sb.on { border: 2px solid #c0c0c0; background: #f4f4f4; }
.sb svg { width: 28px; height: 28px; overflow: visible; }

.status { display: flex; align-items: center; height: 27px; padding-top: 4px; background: #f0f0f0; border-top: 1px solid #fff; }
.status > * { height: 20px; border-right: 1px solid #aaa; }
.s-sheet { width: 302px; padding-left: 12px; }
.s-style { flex: 509; padding-left: 6px; }
.s-ins { width: 67px; }
.s-std { width: 42px; padding-left: 5px; }
.s-mod { width: 21px; padding-left: 5px; }
.s-sig { width: 36px; }
.s-sum { flex: 382; text-align: center; }
.s-zoom { display: flex; align-items: center; gap: 5px; width: 193px; padding: 0 10px 0 6px; }
.s-zoom input { flex: 1; min-width: 0; height: 16px; appearance: none; }
.s-zoom input::-webkit-slider-runnable-track { height: 2px; background: #8c8c8c; }
.s-zoom input::-webkit-slider-thumb { appearance: none; width: 11px; height: 11px; margin-top: -4px; border-radius: 50%; background: #4a7ea6; border: 1px solid #1f4565; }
.status .s-pct { width: 50px; padding-left: 3px; border-right: 0; }
.taskedge { height: 2px; background: linear-gradient(90deg, #222 0 60px, #ccc 60px 490px, #222 490px 926px, #666 926px 987px, #222 987px); }

.toast { position: absolute; right: 20px; bottom: 65px; width: 455px; height: 150px; display: flex; gap: 28px; padding: 26px 60px 0 29px; background: #464646; color: #b4b4b4; }
.toast > svg { width: 42px; height: 40px; margin-top: 14px; }
.toast h2 { margin: 0; font-size: 18px; line-height: 25px; font-weight: 600; color: #fff; }
.toast p { margin: 0; font-size: 18px; line-height: 25px; }
.toast small { display: block; font-size: 14px; line-height: 20px; margin-top: 5px; }
```
